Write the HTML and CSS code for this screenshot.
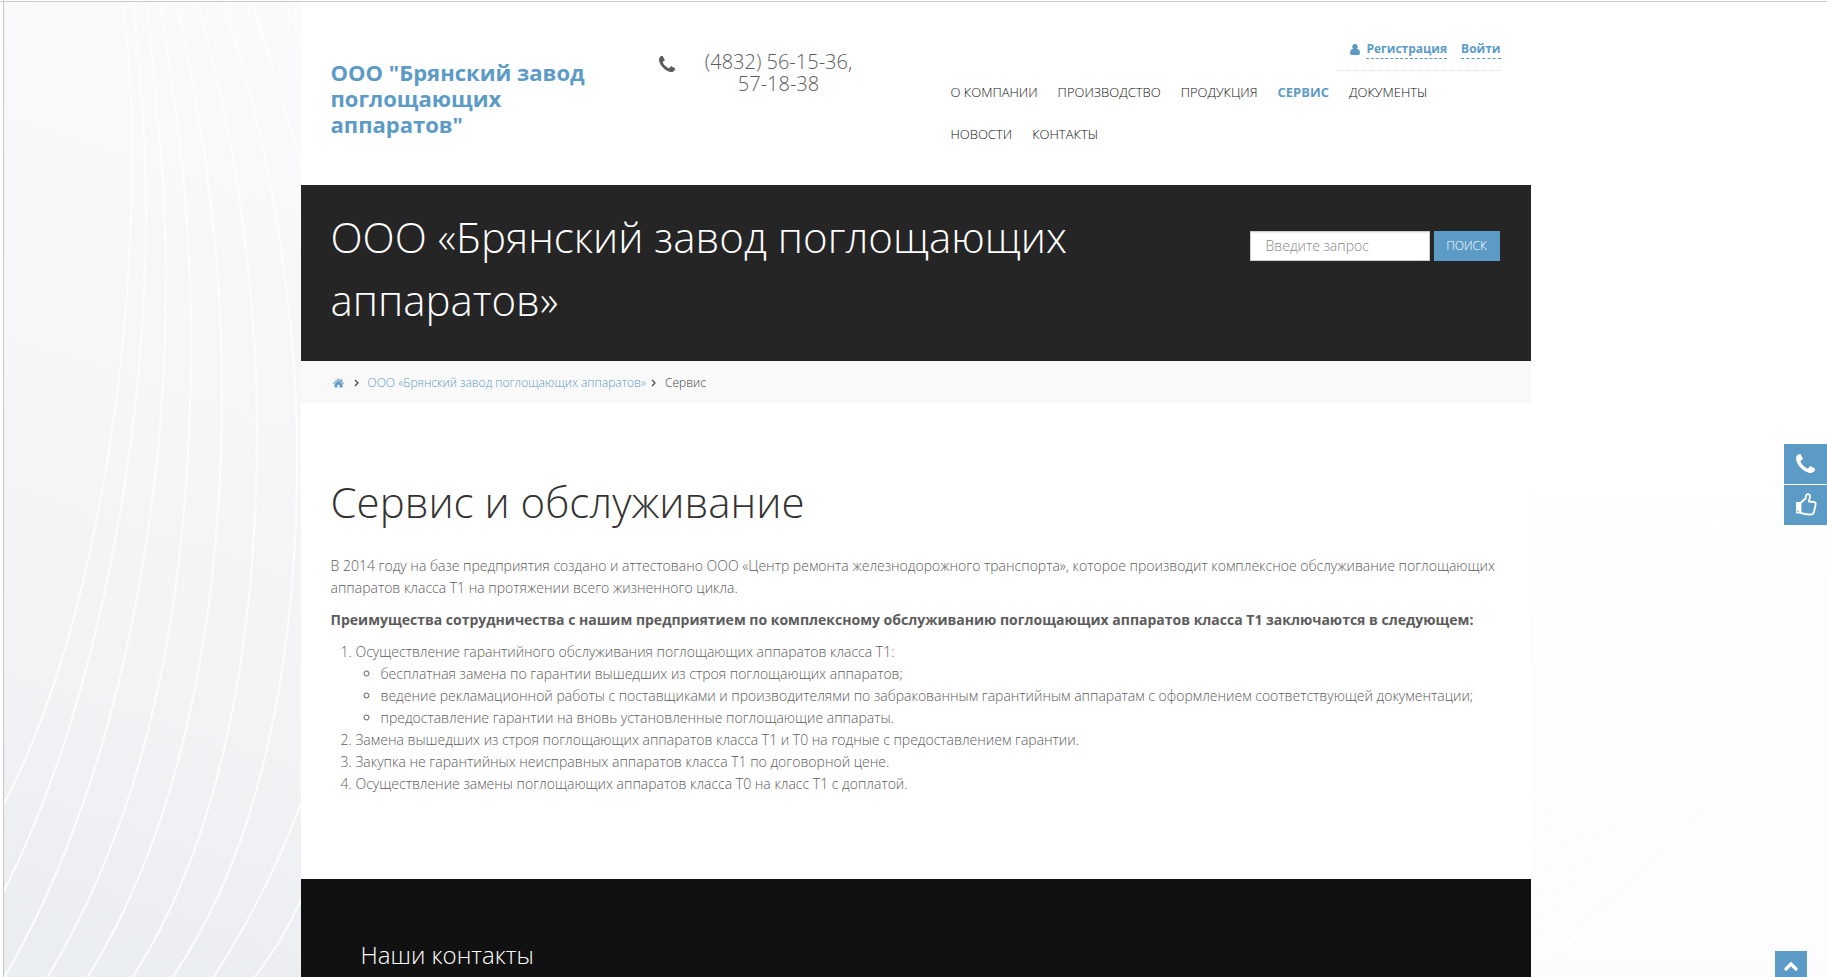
FILE: index.html
```html
<!DOCTYPE html>
<html lang="ru">
<head>
<meta charset="utf-8">
<title>Сервис и обслуживание</title>
<link rel="stylesheet" href="styles.css">
</head>
<body>
<svg class="symbols" aria-hidden="true">
  <symbol id="phone" viewBox="0 0 1408 1408"><path d="M1408 1112q0 27-10 70.500t-21 68.500q-21 50-122 106-94 51-186 51-27 0-53-3.500t-57.500-12.500-47-14.500-55.500-20.500-49-18q-98-35-175-83-127-79-264-216t-216-264q-48-77-83-175-3-9-18-49t-20.500-55.500-14.500-47-12.500-57.500-3.500-53q0-92 51-186 56-101 106-122 25-11 68.500-21t70.500-10q14 0 21 3 18 6 53 76 11 19 30 54t35 63.500 31 53.500q3 4 17.500 25t21.500 35.500 7 28.500q0 20-28.500 50t-62 55-62 53-28.500 46q0 9 5 22.500t8.500 20.500 14 24 11.500 19q76 137 174 235t235 174q2 1 19 11.500t24 14 20.500 8.500 22.500 5q18 0 46-28.500t53-62 55-62 50-28.500q14 0 28.500 7t35.500 21.500 25 17.500q25 15 53.500 31t63.500 35 54 30q70 35 76 53 3 7 3 21z"/></symbol>
  <symbol id="chevron" viewBox="0 0 5 8"><path d="M1 1l3 3-3 3" fill="none" stroke="currentColor" stroke-width="1.200"/></symbol>
</svg>
<div class="page">
  <svg class="waves" aria-hidden="true">
    <defs>
      <linearGradient id="mist" x1="0.550" y1="0" x2="0.450" y2="1">
        <stop offset="0" stop-color="#f9fafb"/><stop offset="0.400" stop-color="#f5f6f8"/><stop offset="0.700" stop-color="#f1f3f5"/><stop offset="1" stop-color="#ebeef0"/>
      </linearGradient>
    </defs>
    <rect width="298" height="100%" fill="url(#mist)"/>
    <g fill="none" stroke="#fcfdfd" stroke-width="2" transform="translate(-4 -2)">
      <path d="M123 2C128 50 132 90 132 150C132 400 84 650 4 804"/>
      <path d="M133 2C140 70 146 140 146 210C146 460 90 720 4 891"/>
      <path d="M147 2C156 100 166 180 166 280C166 540 108 800 4 978"/>
      <path d="M160 2C178 120 191 210 191 340C191 600 148 810 47 978"/>
      <path d="M177 2C200 110 222 250 222 390C222 620 180 830 87 978"/>
      <path d="M198 2C230 120 257 270 257 430C257 660 215 850 132 978"/>
      <path d="M222 2C262 110 296 290 297 450C298 660 260 850 172 978"/>
      <path d="M252 2Q280 90 304 175M304 795Q270 890 213 978"/>
      <path d="M285 2L304 50M304 893Q284 940 254 978"/>
    </g>
  </svg>
  <svg class="rays" viewBox="0 0 296 577" preserveAspectRatio="none" aria-hidden="true">
    <defs><linearGradient id="haze" x1="0" y1="0" x2="0" y2="1"><stop offset="0" stop-color="#fff"/><stop offset="0.500" stop-color="#fdfdfd"/><stop offset="1" stop-color="#fcfcfe"/></linearGradient></defs>
    <rect width="296" height="577" fill="url(#haze)"/>
    <g fill="none" stroke="#fff" stroke-width="2"><path d="M0 400Q90 250 190 115M0 450Q100 270 225 130M0 500Q100 350 150 310M0 540Q100 370 280 210M10 577Q130 430 290 300"/></g>
  </svg>
  <div class="container">
    <header class="header">
      <a class="logo" href="#">ООО "Брянский завод поглощающих аппаратов"</a>
      <div class="phone"><svg class="phone-icon"><use href="#phone"/></svg><p class="phone-text">(4832) 56-15-36, 57-18-38</p></div>
      <div class="menu">
        <div class="auth">
          <svg class="user-icon" viewBox="0 0 10 11"><path d="M5 0a2.700 2.700 0 0 1 1.800 4.800Q10 5.500 10 9q0 2-1.700 2H1.700Q0 11 0 9 0 5.500 3.200 4.800A2.700 2.700 0 0 1 5 0z"/></svg>
          <a class="auth-link" href="#">Регистрация</a><a class="auth-link auth-login" href="#">Войти</a>
        </div>
        <nav class="nav">
          <a href="#">О компании</a><a href="#">Производство</a><a href="#">Продукция</a><a class="active" href="#">Сервис</a><a href="#">Документы</a><a href="#">Новости</a><a href="#">Контакты</a>
        </nav>
      </div>
    </header>
    <section class="banner">
      <p class="banner-title">ООО «Брянский завод поглощающих аппаратов»</p>
      <form class="search"><input class="search-input" type="text" placeholder="Введите запрос" aria-label="Поиск"><button class="search-button" type="button">Поиск</button></form>
    </section>
    <nav class="crumbs">
      <a class="home" href="#" aria-label="Главная"><svg class="home-icon" viewBox="0 0 12 10"><path d="M6 0l2.500 2.200V.8H10v2.700L12 5.300l-.7.700L6 1.500.700 6 0 5.300z"/><path d="M6 2.300L10.300 6v4H7.200V7H4.800v3H1.700V6z"/></svg></a>
      <svg class="chevron"><use href="#chevron"/></svg>
      <a class="crumb-link" href="#">ООО «Брянский завод поглощающих аппаратов»</a>
      <svg class="chevron near"><use href="#chevron"/></svg>
      <span>Сервис</span>
    </nav>
    <main class="content">
      <h1>Сервис и обслуживание</h1>
      <p>В 2014 году на базе предприятия создано и аттестовано ООО «Центр ремонта железнодорожного транспорта», которое производит комплексное обслуживание поглощающих аппаратов класса Т1 на протяжении всего жизненного цикла.</p>
      <p><b>Преимущества сотрудничества с нашим предприятием по комплексному обслуживанию поглощающих аппаратов класса Т1 заключаются в следующем:</b></p>
      <ol>
        <li>Осуществление гарантийного обслуживания поглощающих аппаратов класса Т1:
          <ul>
            <li>бесплатная замена по гарантии вышедших из строя поглощающих аппаратов;</li>
            <li>ведение рекламационной работы с поставщиками и производителями по забракованным гарантийным аппаратам с оформлением соответствующей документации;</li>
            <li>предоставление гарантии на вновь установленные поглощающие аппараты.</li>
          </ul>
        </li>
        <li>Замена вышедших из строя поглощающих аппаратов класса Т1 и Т0 на годные с предоставлением гарантии.</li>
        <li>Закупка не гарантийных неисправных аппаратов класса Т1 по договорной цене.</li>
        <li>Осуществление замены поглощающих аппаратов класса Т0 на класс Т1 с доплатой.</li>
      </ol>
    </main>
    <footer class="footer"><h2>Наши контакты</h2></footer>
  </div>
</div>
<div class="side">
  <button class="side-button" type="button" aria-label="Позвонить"><svg class="side-phone"><use href="#phone"/></svg></button>
  <button class="side-button" type="button" aria-label="Отзыв"><svg class="side-thumb" viewBox="0 0 22 23"><path d="M5.500 10L10.500 5.500Q11 1.200 12.500 1.200Q15.300 1.200 15 4L13.800 8.500L19 9Q21.200 9.500 20.500 12L19 19Q18.300 22 14 21.500Q10 21.200 5.500 19.800z" fill="none" stroke="#fff" stroke-width="1.800" stroke-linejoin="round"/><path d="M1 9h4.500v11.500H1z"/><circle cx="2.900" cy="18.300" r=".8" fill="#5d9bc7"/></svg></button>
</div>
<button class="up" type="button" aria-label="Наверх"><svg class="up-icon" viewBox="0 0 14 9"><path d="M2 7l5-5 5 5" fill="none" stroke="#fff" stroke-width="3.200" stroke-linecap="round"/></svg></button>
</body>
</html>
```
FILE: styles.css
```css
* { box-sizing: border-box; }
body {
  margin: 0;
  height: 100vh;
  overflow: hidden;
  background: #fff;
  color: #5c5c5c;
  font: 300 14px/22px "Open Sans", sans-serif;
}
a { color: #5d9bc7; text-decoration: none; }
b { font-weight: 700; }
svg { fill: currentColor; flex: none; }
button, input { font: inherit; }
.symbols { position: absolute; width: 0; height: 0; }
.page {
  position: relative;
  height: 100vh;
  margin-left: 3px;
  overflow: hidden;
  border-left: 1px solid #c4c7ca;
}
.page::before {
  content: "";
  display: block;
  height: 1px;
  margin-top: 1px;
  background: #c8cacc;
}
body::before {
  content: "";
  position: absolute;
  top: 1px;
  left: 0;
  width: 100%;
  height: 1px;
  background: #c8cacc;
}
.waves { position: absolute; top: 2px; left: 0; width: 298px; height: 100%; }
.rays { position: absolute; right: 0; bottom: 0; width: 296px; height: 577px; }
.container {
  position: relative;
  max-width: 1230px;
  margin: 0 auto;
  background: #fff;
}
.header {
  display: grid;
  grid-template-columns: 328px 282px 1fr;
  min-height: 183px;
  padding: 0 30px;
}
.logo {
  max-width: 270px;
  padding-top: 57px;
  font-size: 22px;
  font-weight: 700;
  line-height: 26px;
}
.phone { display: flex; align-items: flex-start; padding-top: 49px; }
.phone-icon { width: 16px; height: 16px; margin-top: 5px; }
.phone-text {
  width: 166px;
  margin: 0 0 0 21px;
  font-size: 20px;
  line-height: 22px;
  text-align: center;
}
.menu { display: flex; flex-direction: column; padding-top: 38px; }
.auth {
  display: flex;
  align-self: flex-end;
  align-items: center;
  padding: 0 0 11px 13px;
  border-bottom: 1px dotted #ddd;
  font-size: 12px;
  font-weight: 700;
  line-height: 18px;
}
.user-icon { width: 10px; height: 11px; margin-right: 6px; color: #5d9bc7; }
.auth-link { border-bottom: 1px dashed #5d9bc7; }
.auth-login { margin-left: 14px; }
.nav { display: flex; flex-wrap: wrap; text-transform: uppercase; font-size: 13px; line-height: 42px; }
.nav a { padding: 0 10px; color: #111; }
.nav .active { color: #5d9bc7; font-weight: 700; }
.banner {
  display: flex;
  justify-content: space-between;
  align-items: flex-start;
  padding: 20px 31px 30px 30px;
  background: #252525;
}
.banner-title { max-width: 780px; margin: 0; color: #fff; font-size: 42px; line-height: 63px; }
.search { display: flex; gap: 4px; padding-top: 26px; }
.search-input {
  width: 180px;
  height: 30px;
  padding: 0 15px 2px;
  border: 1px solid #ccc;
  background: #fff;
  box-shadow: inset 0 1px 1px rgba(0, 0, 0, .08);
}
.search-input::placeholder { color: #888; opacity: 1; }
.search-button {
  width: 66px;
  height: 30px;
  padding: 0;
  border: 0;
  background: #5d9bc7;
  color: #fff;
  font-size: 12px;
  text-transform: uppercase;
}
.crumbs {
  display: flex;
  align-items: center;
  height: 42px;
  padding: 2px 32px 0;
  background: #f9f9f9;
  color: #444;
  font-size: 12px;
}
.home { display: flex; }
.home-icon { width: 11px; height: 10px; }
.chevron { width: 5px; height: 8px; margin: 0 9px 0 10px; }
.chevron.near { margin-left: 5px; }
.content { padding: 67px 30px 84px; }
h1 { margin: 0 0 22px; color: #333; font-size: 42px; font-weight: 300; line-height: 63px; }
.content p { margin: 0 0 10px; }
ol { margin: 0; padding-left: 25px; }
ul { margin: 0; padding-left: 25px; }
.footer { min-height: 300px; padding: 58px 60px; background: #111; color: #fff; }
.footer h2 { margin: 0; font-size: 24px; font-weight: 300; line-height: 36px; }
.side { position: absolute; top: 444px; right: 0; display: grid; gap: 1px; }
.side-button, .up {
  display: flex;
  align-items: center;
  justify-content: center;
  padding: 0 0 2px;
  border: 0;
  background: #5d9bc7;
  color: #fff;
}
.side-button { width: 43px; height: 40px; }
.side-phone { width: 19px; height: 19px; }
.side-thumb { width: 22px; height: 23px; }
.up { position: absolute; right: 20px; bottom: -6px; width: 32px; height: 32px; }
.up-icon { width: 14px; height: 9px; }
```
